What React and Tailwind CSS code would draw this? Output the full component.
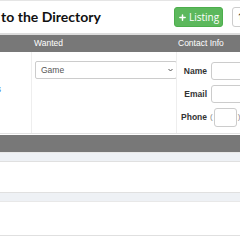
import { Plus } from 'lucide-react';

const ContactField = ({ label, children }) => (
  <div className="flex items-center h-[18px]">
    <span className="w-[30px] text-right font-bold text-[8.5px] text-[#333]">{label}</span>
    <div className="ml-[4px] flex items-center">{children}</div>
  </div>
);

const App = () => {
  return (
    <div className="w-[240px] h-[240px] overflow-hidden bg-white font-['Liberation_Sans',Arial,sans-serif]">
      <div className="-ml-[120px] w-[480px]">
        {/* Title bar */}
        <div className="flex items-center h-[35px] border-t border-[#e5e5e5] border-b-2 border-b-[#dcdcdc]">
          <h1 className="pl-[59px] w-[294px] font-['Lato',sans-serif] font-bold text-[14px] text-[#111] leading-none">
            Welcome to the Directory
          </h1>
          <button className="flex items-center gap-[2px] h-[20px] w-[49px] justify-center rounded-[3px] bg-[#5cb85c] border border-[#4cae4c] text-white text-[10px] font-['Open_Sans',sans-serif]">
            <Plus size={9} strokeWidth={4} />
            Listing
          </button>
          <button className="ml-[9px] h-[20px] px-[5px] rounded-[3px] bg-white border border-[#ccc] text-[#333] text-[9.5px]">
            ⇅ Sort
          </button>
        </div>

        {/* Table header */}
        <div className="flex h-[17px] bg-[#787878] text-white text-[8.5px] items-center">
          <div className="w-[151px]" />
          <div className="w-[145px] pl-[3px]">Wanted</div>
          <div className="pl-[2px]">Contact Info</div>
        </div>

        {/* Listing row */}
        <div className="flex h-[82px] border-b border-[#e2e2e2]">
          <div className="w-[151px] pt-[27px] pr-[30px] text-right leading-none">
            <a href="#" className="text-[8.5px] text-[#2a7ae2]">Details</a>
          </div>
          <div className="w-[145px] border-l border-[#eee] pl-[3px] pt-[9px]">
            <div className="flex items-center justify-between h-[18px] w-[142px] border border-[#ccc] rounded-[2px] pl-[5px] pr-[3px] text-[8.5px] text-[#555]">
              <span>Game</span>
              <svg width="5" height="4" viewBox="0 0 5 4" fill="none" stroke="#555" strokeWidth="1">
                <path d="M0.5 1l2 2 2-2" />
              </svg>
            </div>
          </div>
          <div className="flex-1 border-l border-[#eee] pt-[10px] flex flex-col gap-[5px]">
            <ContactField label="Name">
              <div className="w-[60px] h-[18px] border border-[#ccc] rounded-[3px]" />
            </ContactField>
            <ContactField label="Email">
              <div className="w-[60px] h-[18px] border border-[#ccc] rounded-[3px]" />
            </ContactField>
            <ContactField label="Phone">
              <span className="text-[8px] text-[#888] -ml-[1px]">(</span>
              <div className="ml-[1px] w-[23px] h-[19px] border border-[#ccc] rounded-[3px]" />
              <span className="ml-[1px] text-[8px] text-[#888]">)</span>
            </ContactField>
          </div>
        </div>

        {/* Section bar */}
        <div className="mt-[1px] h-[17px] bg-[#787878]" />

        {/* Empty rows */}
        <div className="h-[9px] bg-[#eef1f5] border-t border-[#e8e8e8]" />
        <div className="h-[31px] border-t border-[#e0e0e0]" />
        <div className="h-[9px] bg-[#eef1f5] border-t border-[#e0e0e0]" />
        <div className="h-[35px] border-t border-[#e8e8e8] border-b border-b-[#e0e0e0]" />
      </div>
    </div>
  );
};

export default App;
